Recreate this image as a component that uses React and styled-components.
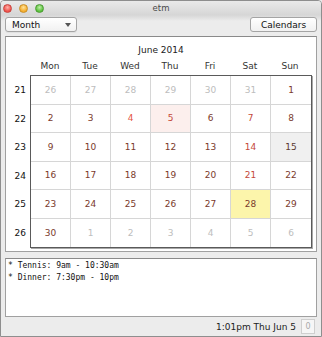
import React from 'react'
import styled, { createGlobalStyle } from 'styled-components'

const GlobalStyle = createGlobalStyle`
    html, body {
        margin: 0;
        padding: 0;
        background: #ececec;
    }
    * {
        box-sizing: border-box;
    }
`

const Window = styled.div`
    width: 322px;
    height: 337px;
    display: flex;
    flex-direction: column;
    background: #ececec;
    border: 1px solid #8e8e8e;
    border-radius: 4px 4px 0 0;
    font-family: "DejaVu Sans", "Liberation Sans", sans-serif;
    font-size: 9px;
    color: #222;
    overflow: hidden;
`

const TitleBar = styled.div`
    height: 14px;
    display: grid;
    grid-template-columns: 1fr auto 1fr;
    align-items: center;
    padding: 0 2px;
    background: linear-gradient(#eaeaea, #d6d6d6);
`

const Lights = styled.div`
    display: flex;
    gap: 7px;
`

const Light = styled.span`
    width: 9px;
    height: 9px;
    border-radius: 50%;
    background: radial-gradient(circle at 50% 35%, ${p => p.$hi} 0%, ${p => p.$c} 65%);
    border: 1px solid ${p => p.$edge};
`

const WinTitle = styled.div`
    font-size: 8.5px;
    color: #4a4a4a;
`

const Toolbar = styled.div`
    display: flex;
    justify-content: space-between;
    align-items: flex-start;
    padding: 2px 4px 4px 4px;
    background: linear-gradient(#d6d6d6, #ececec 6px);
`

const Select = styled.div`
    width: 72px;
    height: 15px;
    display: flex;
    align-items: center;
    justify-content: space-between;
    padding: 0 5px 0 6px;
    border: 1px solid #a4a4a4;
    border-radius: 3px;
    background: linear-gradient(#ffffff, #f1f1f1);
    color: #111;
    box-shadow: 0 1px 0 rgba(0, 0, 0, 0.05);
`

const Caret = styled.svg`
    width: 6px;
    height: 4px;
    fill: #555;
`

const Button = styled.div`
    width: 67px;
    height: 15px;
    display: flex;
    align-items: center;
    justify-content: center;
    border: 1px solid #a4a4a4;
    border-radius: 3px;
    background: linear-gradient(#ffffff, #f1f1f1);
    color: #111;
`

const CalendarPanel = styled.div`
    height: 216px;
    margin: 0 4px;
    background: #fff;
    border: 1px solid #a0a0a0;
    border-top-color: #8a8a8a;
    display: flex;
    flex-direction: column;
`

const MonthTitle = styled.div`
    height: 20px;
    padding-top: 6px;
    line-height: 14px;
    text-align: center;
    color: #222;
`

const HeaderRow = styled.div`
    height: 18px;
    display: grid;
    grid-template-columns: 24px repeat(7, 40px);
    align-items: center;
`

const DayName = styled.div`
    text-align: center;
    color: #333;
`

const Body = styled.div`
    display: grid;
    grid-template-columns: 24px 282px;
`

const WeekNums = styled.div`
    height: 173px;
    display: grid;
    grid-template-rows: repeat(6, 1fr);
    padding: 1px 0;
`

const WeekNum = styled.div`
    display: flex;
    align-items: center;
    justify-content: flex-end;
    padding-right: 4px;
    color: #111;
`

const Grid = styled.div`
    height: 173px;
    display: grid;
    grid-template-columns: repeat(7, 40px);
    grid-template-rows: repeat(6, 1fr);
    border: 1px solid #5a5a5a;
    box-shadow: 1px 1px 0 #a8a8a8;
`

const Cell = styled.div`
    display: flex;
    align-items: center;
    justify-content: center;
    border-right: ${p => (p.$lastCol ? 'none' : '1px solid #d6d6d6')};
    border-bottom: ${p => (p.$lastRow ? 'none' : '1px solid #d6d6d6')};
    background: ${p => p.$bg || '#fff'};
    color: ${p => p.$color};
`

const EventPanel = styled.div`
    height: 59px;
    margin: 6px 4px 0 4px;
    padding: 1px 2px;
    background: #fff;
    border: 1px solid #a0a0a0;
    border-top-color: #8a8a8a;
    font-family: "DejaVu Sans Mono", "Liberation Mono", monospace;
    font-size: 8px;
    line-height: 11.5px;
    color: #111;
    white-space: pre;
`

const StatusBar = styled.div`
    flex: 1;
    display: flex;
    justify-content: flex-end;
    align-items: center;
    gap: 5px;
    padding-right: 6px;
    color: #222;
`

const Counter = styled.div`
    width: 14px;
    height: 15px;
    display: flex;
    align-items: center;
    justify-content: center;
    border: 1px solid #cfcfcf;
    background: #f6f6f6;
    color: #aaa;
    font-size: 8px;
`

const C = {
    other: '#bdbdbd',
    day: '#7a3a2c',
    red: '#c4483a',
    orange: '#e4553f',
    dark: '#5a3a30',
}

const weeks = [
    { n: 21, days: [[26, 'other'], [27, 'other'], [28, 'other'], [29, 'other'], [30, 'other'], [31, 'other'], [1, 'day']] },
    { n: 22, days: [[2, 'day'], [3, 'day'], [4, 'orange'], [5, 'red', '#fcefed'], [6, 'day'], [7, 'red'], [8, 'day']] },
    { n: 23, days: [[9, 'day'], [10, 'day'], [11, 'day'], [12, 'day'], [13, 'day'], [14, 'red'], [15, 'dark', '#f0f0f0']] },
    { n: 24, days: [[16, 'day'], [17, 'day'], [18, 'day'], [19, 'day'], [20, 'day'], [21, 'red'], [22, 'day']] },
    { n: 25, days: [[23, 'day'], [24, 'day'], [25, 'day'], [26, 'day'], [27, 'day'], [28, 'day', '#fcf5ab'], [29, 'day']] },
    { n: 26, days: [[30, 'day'], [1, 'other'], [2, 'other'], [3, 'other'], [4, 'other'], [5, 'other'], [6, 'other']] },
]

const dayNames = ['Mon', 'Tue', 'Wed', 'Thu', 'Fri', 'Sat', 'Sun']

export default function App() {
    return (
        <>
            <GlobalStyle />
            <Window>
                <TitleBar>
                    <Lights>
                        <Light $c="#f0524c" $hi="#ffb0a8" $edge="#c8433d" />
                        <Light $c="#f5ae2e" $hi="#ffe29a" $edge="#c98d25" />
                        <Light $c="#5cc23e" $hi="#bff0a8" $edge="#4a9a32" />
                    </Lights>
                    <WinTitle>etm</WinTitle>
                    <span />
                </TitleBar>
                <Toolbar>
                    <Select>
                        Month
                        <Caret viewBox="0 0 6 4">
                            <path d="M0 0h6L3 4z" />
                        </Caret>
                    </Select>
                    <Button>Calendars</Button>
                </Toolbar>
                <CalendarPanel>
                    <MonthTitle>June 2014</MonthTitle>
                    <HeaderRow>
                        <span />
                        {dayNames.map(d => (
                            <DayName key={d}>{d}</DayName>
                        ))}
                    </HeaderRow>
                    <Body>
                        <WeekNums>
                            {weeks.map(w => (
                                <WeekNum key={w.n}>{w.n}</WeekNum>
                            ))}
                        </WeekNums>
                        <Grid>
                            {weeks.map((w, r) =>
                                w.days.map(([d, kind, bg], c) => (
                                    <Cell
                                        key={`${r}-${c}`}
                                        $color={C[kind]}
                                        $bg={bg}
                                        $lastCol={c === 6}
                                        $lastRow={r === 5}>
                                        {d}
                                    </Cell>
                                ))
                            )}
                        </Grid>
                    </Body>
                </CalendarPanel>
                <EventPanel>
                    {'* Tennis: 9am - 10:30am\n* Dinner: 7:30pm - 10pm'}
                </EventPanel>
                <StatusBar>
                    1:01pm Thu Jun 5
                    <Counter>0</Counter>
                </StatusBar>
            </Window>
        </>
    )
}
